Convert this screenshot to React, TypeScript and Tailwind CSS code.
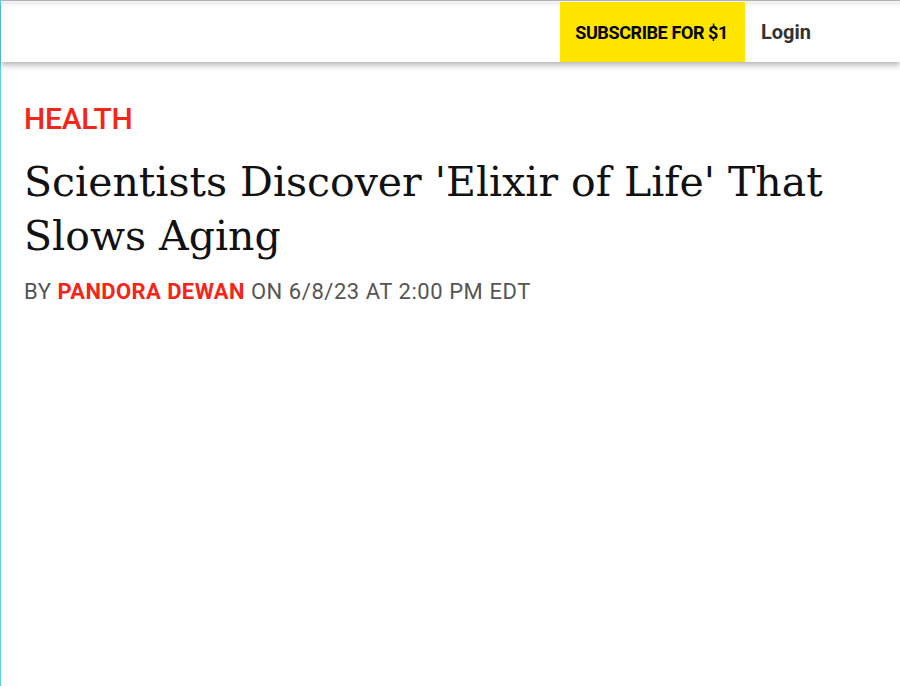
const App: React.FC = () => {
  return (
    <div className="min-h-[686px] w-[900px] bg-white border-l-[1.5px] border-[#5bd0ef] font-['Roboto',sans-serif]">
      <div className="border-t border-[#b5b5b5] pt-px">
        <header className="flex h-[60px] justify-end bg-white shadow-[0_3px_6px_rgba(0,0,0,0.3),inset_0_4px_5px_-3px_rgba(0,0,0,0.12)] pr-[89px]">
          <a className="flex items-center bg-[#ffe500] pl-[15px] pr-[17px] text-[18px] font-bold tracking-[-0.4px] text-black">
            SUBSCRIBE FOR $1
          </a>
          <a className="flex items-center pl-[16px] text-[20px] font-bold text-[#333]">Login</a>
        </header>
      </div>
      <main className="px-[23px] pt-[42px]">
        <div className="text-[30px] font-medium leading-none tracking-[-0.3px] text-[#f4261a]">HEALTH</div>
        <h1 className="mt-[21px] text-[41px] leading-[54px] text-[#111] font-['DejaVu_Serif',serif]">
          Scientists Discover 'Elixir of Life' That Slows Aging
        </h1>
        <p className="mt-[12px] text-[22px] tracking-[0.55px] text-[#555]">
          BY <span className="font-bold tracking-[0.4px] text-[#f4261a]">PANDORA DEWAN</span> ON 6/8/23 AT 2:00 PM EDT
        </p>
      </main>
    </div>
  )
}

export default App
